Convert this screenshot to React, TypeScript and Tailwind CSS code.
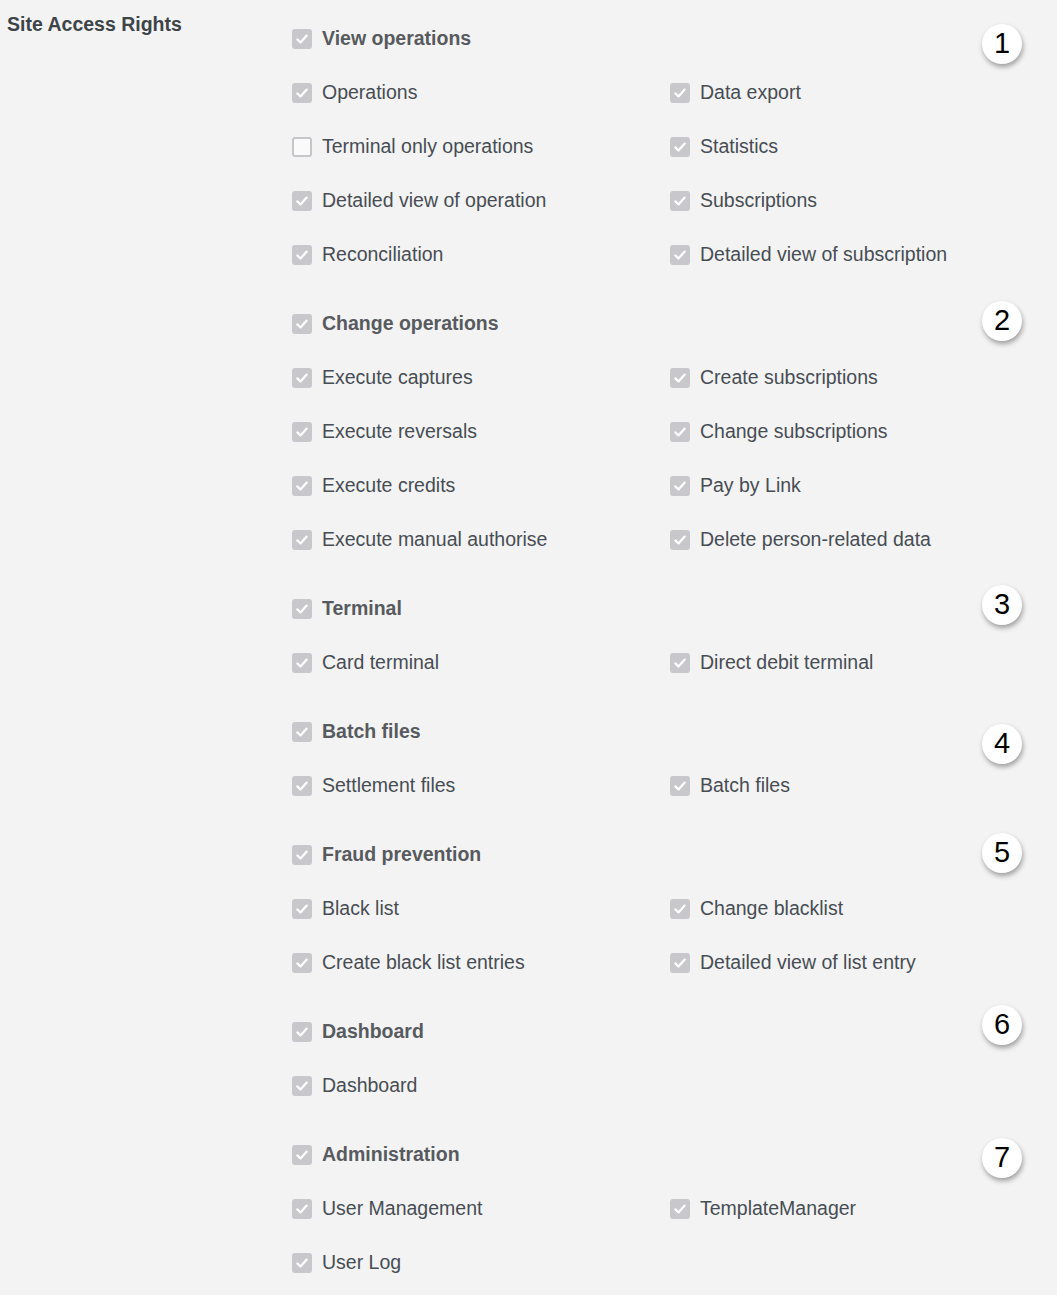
type Group = {
  title: string;
  badge: string;
  shift: string;
  items: { label: string; checked?: boolean }[];
};

const groups: Group[] = [
  {
    title: "View operations",
    badge: "1",
    shift: "translate-y-[5px]",
    items: [
      { label: "Operations" },
      { label: "Data export" },
      { label: "Terminal only operations", checked: false },
      { label: "Statistics" },
      { label: "Detailed view of operation" },
      { label: "Subscriptions" },
      { label: "Reconciliation" },
      { label: "Detailed view of subscription" },
    ],
  },
  {
    title: "Change operations",
    badge: "2",
    shift: "-translate-y-[3px]",
    items: [
      { label: "Execute captures" },
      { label: "Create subscriptions" },
      { label: "Execute reversals" },
      { label: "Change subscriptions" },
      { label: "Execute credits" },
      { label: "Pay by Link" },
      { label: "Execute manual authorise" },
      { label: "Delete person-related data" },
    ],
  },
  {
    title: "Terminal",
    badge: "3",
    shift: "-translate-y-[4px]",
    items: [{ label: "Card terminal" }, { label: "Direct debit terminal" }],
  },
  {
    title: "Batch files",
    badge: "4",
    shift: "translate-y-[12px]",
    items: [{ label: "Settlement files" }, { label: "Batch files" }],
  },
  {
    title: "Fraud prevention",
    badge: "5",
    shift: "-translate-y-[2px]",
    items: [
      { label: "Black list" },
      { label: "Change blacklist" },
      { label: "Create black list entries" },
      { label: "Detailed view of list entry" },
    ],
  },
  {
    title: "Dashboard",
    badge: "6",
    shift: "-translate-y-[7px]",
    items: [{ label: "Dashboard" }],
  },
  {
    title: "Administration",
    badge: "7",
    shift: "translate-y-[3px]",
    items: [{ label: "User Management" }, { label: "TemplateManager" }, { label: "User Log" }],
  },
];

function Box({ checked = true }: { checked?: boolean }) {
  if (!checked) {
    return <span className="w-5 h-5 shrink-0 rounded-[3px] border-2 border-[#c6c6ca] bg-[#fafafa]" />;
  }
  return (
    <span className="w-5 h-5 shrink-0 rounded-[3px] bg-[#c8c8cc] flex items-center justify-center">
      <svg width="14" height="14" viewBox="0 0 14 14" fill="none">
        <path d="M2.3 7.4 L5.5 10.4 L11.7 3.6" stroke="#fff" strokeWidth="2.2" strokeLinecap="round" strokeLinejoin="round" />
      </svg>
    </span>
  );
}

function Row({ label, checked, bold }: { label: string; checked?: boolean; bold?: boolean }) {
  return (
    <div className="h-[54px] flex items-center gap-[10px]">
      <Box checked={checked} />
      <span className={bold ? "font-bold text-[#575a5e]" : "text-[#474d53]"}>{label}</span>
    </div>
  );
}

export default function App() {
  return (
    <div
      className="min-h-[1295px] w-[1057px] bg-[#f3f3f3] flex text-[19.5px]"
      style={{ fontFamily: '"Liberation Sans", Arial, sans-serif' }}
    >
      <div className="w-[292px] shrink-0 pl-[7px] pt-[11px]">
        <h2 className="font-bold text-[#3d4448] leading-[26px]">Site Access Rights</h2>
      </div>
      <div className="flex flex-col gap-[15px] pt-[12px]">
        {groups.map((g) => (
          <div key={g.title}>
            <div className="flex items-center justify-between w-[730px]">
              <Row label={g.title} bold />
              <div
                className={`w-10 h-10 rounded-full bg-white flex items-center justify-center text-[29px] text-black shadow-[1px_3px_5px_rgba(0,0,0,0.35)] ${g.shift}`}
              >
                {g.badge}
              </div>
            </div>
            <div className="grid grid-cols-[378px_378px]">
              {g.items.map((it) => (
                <Row key={it.label} label={it.label} checked={it.checked} />
              ))}
            </div>
          </div>
        ))}
      </div>
    </div>
  );
}
